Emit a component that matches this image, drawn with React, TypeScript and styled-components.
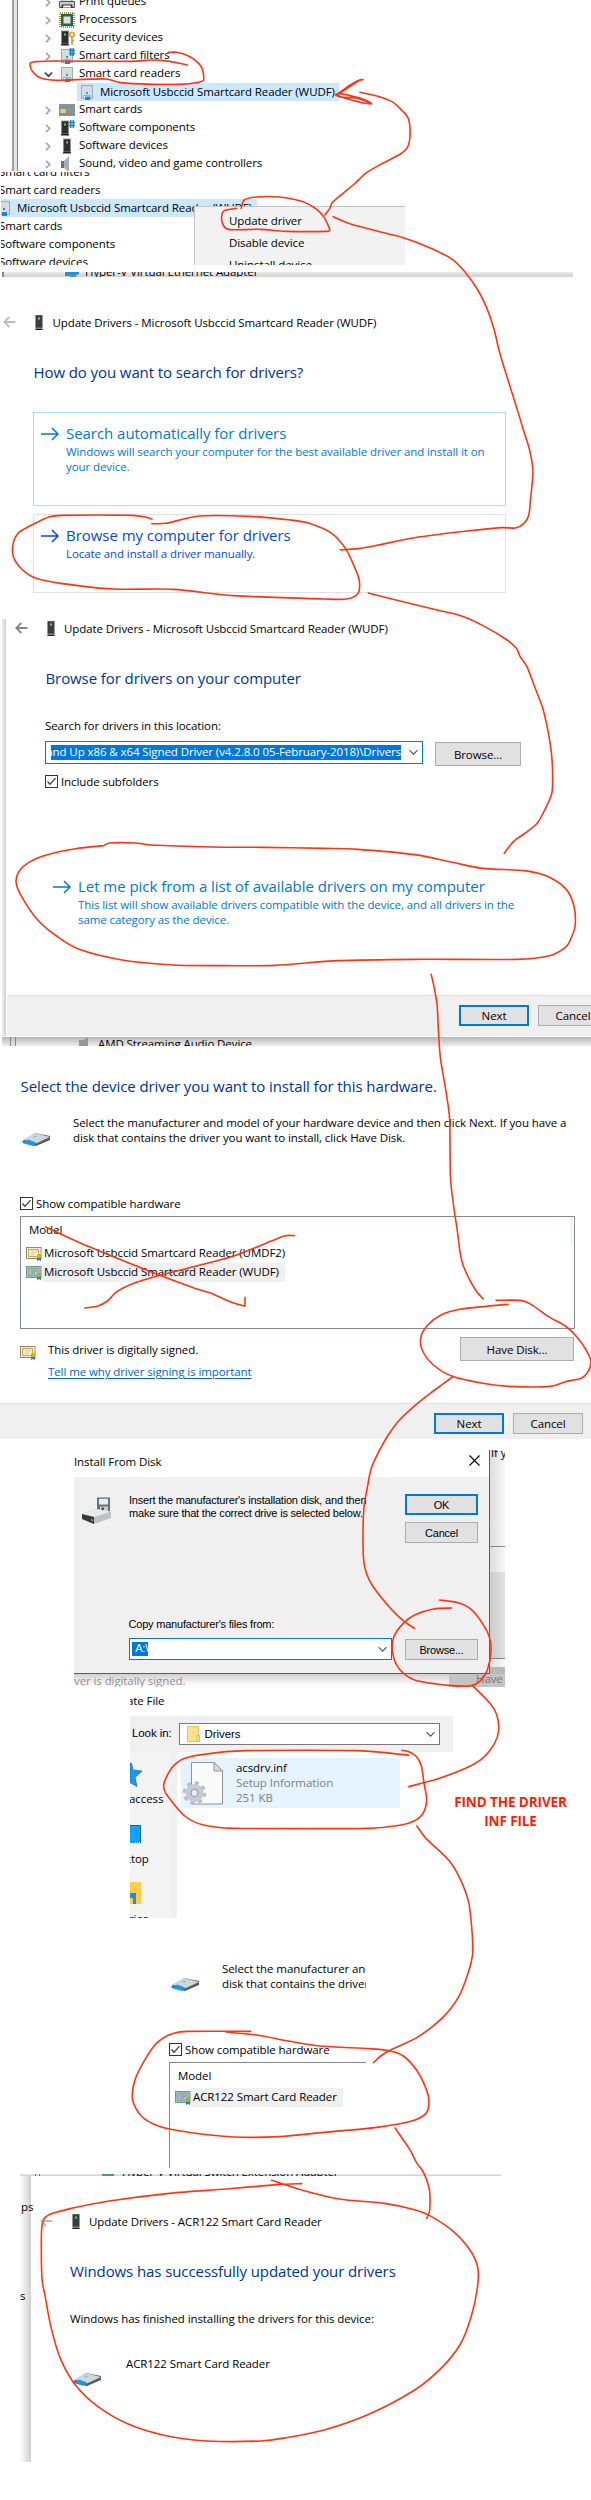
import React from "react";
import styled, { createGlobalStyle, css } from "styled-components";

const Global = createGlobalStyle`
  html, body { margin: 0; background: #fff; }
  * { box-sizing: border-box; }
`;

const ui = `"Open Sans", "Noto Sans", sans-serif`;
const classic = `"Liberation Sans", Arial, sans-serif`;

const Page = styled.main`
  position: relative;
  width: 591px;
  height: 2500px;
  overflow: hidden;
  background: #fff;
  color: #000;
  font-family: ${ui};
  font-size: 11.5px;
  letter-spacing: -0.09px;
  line-height: 15px;
`;

type Space = { $t?: number; $l?: number };
const space = css<Space>`
  margin-top: ${(p) => p.$t ?? 0}px;
  margin-left: ${(p) => p.$l ?? 0}px;
`;

/* A clipped part of a window */
const Panel = styled.section<Space & { $w?: number; $h: number }>`
  ${space}
  display: flex;
  flex-direction: column;
  align-items: stretch;
  width: ${(p) => (p.$w ? `${p.$w}px` : "auto")};
  height: ${(p) => p.$h}px;
  overflow: hidden;
`;
const Row = styled.div<Space & { $h?: number }>`
  ${space}
  display: flex;
  align-items: flex-start;
  flex: none;
  height: ${(p) => (p.$h ? `${p.$h}px` : "auto")};
`;
const Column = styled.div<Space & { $w?: number }>`
  ${space}
  display: flex;
  flex-direction: column;
  flex: none;
  width: ${(p) => (p.$w ? `${p.$w}px` : "auto")};
`;
const Text = styled.div<Space & { $color?: string }>`
  ${space}
  flex: none;
  white-space: nowrap;
  color: ${(p) => p.$color ?? "inherit"};
`;
const Heading = styled.h1<Space>`
  margin: 0;
  ${space}
  flex: none;
  font-size: 15px;
  font-weight: 400;
  line-height: 20px;
  white-space: nowrap;
  color: #003399;
`;
const Button = styled.button<Space & { $w: number; $h: number; $primary?: boolean; $classic?: boolean }>`
  ${space}
  flex: none;
  width: ${(p) => p.$w}px;
  height: ${(p) => p.$h}px;
  padding: 0;
  border: ${(p) => (p.$primary ? "2px solid #0078d7" : "1px solid #adadad")};
  background: #e1e1e1;
  color: #000;
  font-family: ${(p) => (p.$classic ? classic : ui)};
  font-size: ${(p) => (p.$classic ? "11px" : "11.5px")};
  letter-spacing: inherit;
  white-space: nowrap;
`;
const Footer = styled.footer<Space & { $h: number }>`
  ${space}
  display: flex;
  flex: none;
  height: ${(p) => p.$h}px;
  background: #f0f0f0;
  border-top: 1px solid #dfdfdf;
`;

/* Device tree */
const Tree = styled.div`
  display: flex;
  flex-direction: column;
  flex: none;
  margin-top: -7px;
`;
const TreeSide = styled.div`
  flex: none;
  width: 6px;
  height: 171px;
  margin-left: 12px;
  background: #e3e3e3;
  border-left: 2px solid #a0a0a0;
  border-right: 1px solid #828790;
`;
const TreeRow = styled.div`
  display: grid;
  grid-template-columns: 15px 20px auto;
  align-items: center;
  height: 18px;
  padding-left: 26px;
  line-height: 18px;
  white-space: nowrap;
  & > span { margin-top: -2px; }
`;
const SelectedRow = styled.div<{ $w: number; $ml: number; $pad: number }>`
  display: flex;
  align-items: center;
  gap: 5px;
  height: 18px;
  width: ${(p) => p.$w}px;
  margin-left: ${(p) => p.$ml}px;
  padding-left: ${(p) => p.$pad}px;
  background: #cce8ff;
  line-height: 18px;
  white-space: nowrap;
`;
const ShortRow = styled.div`
  height: 18px;
  line-height: 18px;
  margin-left: -2px;
  white-space: nowrap;
`;
const Menu = styled.div`
  position: absolute;
  left: 194px;
  top: 206px;
  width: 211px;
  height: 59px;
  overflow: hidden;
  padding: 3px 0 0 34px;
  background: #f2f2f2;
  border-top: 1px solid #c4c4c4;
  border-left: 1px solid #c4c4c4;
  & > div { height: 22px; line-height: 21px; }
`;
const Strip = styled.div<Space & { $w: number; $h: number; $under?: boolean }>`
  ${space}
  display: flex;
  flex: none;
  width: ${(p) => p.$w}px;
  height: ${(p) => p.$h}px;
  overflow: hidden;
  background: ${(p) => (p.$under ? "linear-gradient(#b8b8b8, #ededed)" : "linear-gradient(#ececec, #cfcfcf)")};
`;

/* Wizard pages */
const Command = styled.div<Space & { $w: number; $h: number; $line: string; $color: string }>`
  ${space}
  display: flex;
  flex: none;
  width: ${(p) => p.$w}px;
  height: ${(p) => p.$h}px;
  padding: 10px 0 0 7px;
  border: 1px solid ${(p) => p.$line};
  color: ${(p) => p.$color};
  white-space: nowrap;
  & > svg { flex: none; margin: 4px 7px 0 0; }
`;
const CommandTitle = styled.div`
  font-size: 15px;
  letter-spacing: -0.04px;
  line-height: 20px;
  margin-bottom: 1px;
`;
const Combo = styled.div<Space & { $w: number; $h: number; $line: string }>`
  ${space}
  display: flex;
  flex: none;
  align-items: center;
  width: ${(p) => p.$w}px;
  height: ${(p) => p.$h}px;
  border: 1px solid ${(p) => p.$line};
  background: #fff;
  & > svg:last-child { margin-left: auto; }
`;
const Picked = styled.div<{ $w: number; $h: number }>`
  display: flex;
  justify-content: flex-end;
  width: ${(p) => p.$w}px;
  height: ${(p) => p.$h}px;
  line-height: ${(p) => p.$h - 1}px;
  overflow: hidden;
  background: #0078d7;
  color: #fff;
  white-space: nowrap;
`;
const Sides = styled.div<{ $h: number }>`
  display: flex;
  height: ${(p) => p.$h}px;
`;
const Shade = styled.div<{ $w: number; $l: number }>`
  flex: none;
  width: ${(p) => p.$w}px;
  margin-left: ${(p) => p.$l}px;
  background: linear-gradient(90deg, #f3f3f3, #cdcdcd);
`;
const EdgeShade = styled(Shade)`
  background: linear-gradient(90deg, #fafafa 10%, #cfcfcf);
`;
const List = styled.div<Space & { $w: number; $h: number; $open?: boolean }>`
  ${space}
  flex: none;
  width: ${(p) => p.$w}px;
  height: ${(p) => p.$h}px;
  border: 1px solid #828790;
  ${(p) => p.$open && "border-right: 0; border-bottom: 0;"}
`;
const ListHead = styled.div<{ $open?: boolean }>`
  height: ${(p) => (p.$open ? 25 : 27)}px;
  margin-right: 2px;
  padding: 5px 0 0 8px;
  border-right: ${(p) => (p.$open ? "0" : "1px solid #e5e5e5")};
`;
const Item = styled.div`
  display: flex;
  align-items: center;
  height: 19px;
  margin-left: 5px;
`;
const ItemLabel = styled.span<{ $on?: boolean }>`
  height: 19px;
  line-height: 18px;
  padding: 0 6px 0 2px;
  background: ${(p) => (p.$on ? "#f0f0f0" : "transparent")};
  white-space: nowrap;
`;
const LinkText = styled(Text)`
  color: #0066cc;
  text-decoration: underline;
  text-underline-offset: 2px;
`;

/* Install From Disk */
const DiskScene = styled(Panel)`
  background: #fff;
`;
const DiskWindow = styled.div`
  flex: none;
  width: 416px;
  height: 224px;
  border-right: 1px solid #5e5e5e;
  border-bottom: 1px solid #5e5e5e;
  background: #f0f0f0;
  font-family: ${classic};
  font-size: 11px;
  letter-spacing: -0.2px;
  line-height: 13px;
`;
const DiskTitle = styled.div`
  display: flex;
  justify-content: space-between;
  height: 27px;
  padding: 5px 9px 0 0;
  background: #fff;
  font-family: ${ui};
  font-size: 11.5px;
  letter-spacing: -0.09px;
  line-height: 14px;
`;
const Behind = styled.div`
  display: flex;
  flex-direction: column;
  width: 15px;
  height: 224px;
  background: linear-gradient(90deg, #ddd, #f8f8f8);
  overflow: hidden;
`;
const Band = styled.div<{ $h: number; $bg: string; $line?: boolean }>`
  flex: none;
  height: ${(p) => p.$h}px;
  background: ${(p) => p.$bg};
  border-bottom: ${(p) => (p.$line ? "1px solid #828790" : "0")};
  padding-left: 1px;
  white-space: nowrap;
`;
const Under = styled.div`
  display: flex;
  justify-content: space-between;
  height: 18px;
  background: linear-gradient(#cfcfcf, #f2f2f2 60%, #fff);
  color: #8f8f8f;
  line-height: 12px;
`;
const DimButton = styled.div`
  width: 56px;
  padding-left: 27px;
  background: #c4c4c4;
  overflow: hidden;
  color: #777;
  line-height: 10px;
`;

/* Locate File */
const Locate = styled(Panel)`
  background: #fff;
`;
const LookBar = styled.div`
  display: flex;
  flex: none;
  height: 36px;
  margin-top: 8px;
  padding: 7px 0 0 2px;
  background: #f0f0f0;
  font-family: ${classic};
  font-size: 11.5px;
`;
const Places = styled.div`
  flex: none;
  width: 47px;
  height: 166px;
  overflow: hidden;
  background: #f4f4f4;
  border-right: 6px solid #f0f0f0;
  & > svg { display: block; }
`;
const FileTile = styled.div`
  display: flex;
  width: 219px;
  height: 50px;
  margin: 6px 0 0 4px;
  padding: 2px 0 0 2px;
  background: #e5f3ff;
`;
const Gray = styled.div`
  color: #808080;
  letter-spacing: -0.03px;
`;
const Note = styled.aside`
  width: 115px;
  margin-top: 106px;
  font-size: 13.5px;
  font-weight: 700;
  line-height: 19px;
  letter-spacing: -0.1px;
  text-align: center;
  color: #fa1e0a;
  white-space: nowrap;
`;
const InkLayer = styled.svg`
  position: absolute;
  left: 0;
  top: 0;
  pointer-events: none;
`;

/* Icons */
const Icon = styled.svg`
  flex: none;
`;
const Chevron = ({ open }: { open?: boolean }) => (
  <Icon width="9" height="9" viewBox="0 0 9 9" fill="none" stroke={open ? "#404040" : "#a6a6a6"} strokeWidth="1.7">
    <path d={open ? "M0.8 2.5 4.5 6.2 8.2 2.5" : "M2 0.8 5.7 4.5 2 8.2"} />
  </Icon>
);
const Down = () => (
  <Icon width="13" height="7" fill="none" stroke="#555" strokeWidth="1.1">
    <path d="M.5 1.2 4.5 5.2 8.5 1.2" />
  </Icon>
);
const Back = ({ color }: { color: string }) => (
  <Icon width="13" height="12" fill="none" stroke={color} strokeWidth="1.8">
    <path d="M12.5 6H1.5M6.3 1 1.3 6l5 5" />
  </Icon>
);
const Go = () => (
  <Icon width="18" height="14" fill="none" stroke="currentColor" strokeWidth="1.5">
    <path d="M0 7h17M11 1l6 6-6 6" />
  </Icon>
);
const Tower = () => (
  <Icon width="8" height="15">
    <rect x=".5" width="7" height="13" fill="#3d3d3d" stroke="#999" strokeWidth=".7" />
    <rect x="3" y="2.5" width="2" height="2" fill="#49f24b" />
    <path d="M1 13.5h6l1 1.5H0z" fill="#222" />
  </Icon>
);
const Check = () => (
  <Icon width="13" height="13" fill="#fff" stroke="#333">
    <rect x=".5" y=".5" width="12" height="12" />
    <path d="M2.5 6.5 5 9.3 10.5 3.2" fill="none" strokeWidth="1.2" />
  </Icon>
);
const Reader = ({ plus }: { plus?: boolean }) => (
  <Icon width="16" height="16">
    <rect x="2.5" y="1.5" width="11" height="13" fill="#d9dcde" stroke="#a5a9ac" />
    <rect x="7" y="8" width="2" height="2" fill="#1ea2ea" />
    <path d="M4.5 11.5h7V15h-7z" fill="#fff" stroke="#8b9094" strokeWidth=".7" />
    <rect x="6" y="12.5" width="5" height="3.5" fill="#1688d8" />
    {plus && <path d="M10 2.5h6M10 5.5h6M11.7 0v8M14.3 0v8" stroke="#1d86d4" strokeWidth="1.6" />}
  </Icon>
);
type Kind = "printer" | "cpu" | "security" | "filter" | "reader" | "card" | "component" | "device" | "sound";
const DeviceIcon = ({ kind }: { kind: Kind }) => {
  if (kind === "filter" || kind === "reader") return <Reader plus={kind === "filter"} />;
  return (
    <Icon width="16" height="16">
      {kind === "printer" && (
        <>
          <rect x="3" y="1" width="10" height="7" fill="#ddd" stroke="#777" />
          <path d="M.5 7.5h15v6H.5z" fill="#c9c9c9" stroke="#555" />
          <path d="M3 10.5h10l1 3.5H2z" fill="#333" />
          <path d="M4.5 11.5h7l.7 2H3.8z" fill="#fff" />
        </>
      )}
      {kind === "cpu" && (
        <>
          <rect x="1" y="1" width="14" height="14" fill="none" stroke="#a8914a" strokeWidth="2" strokeDasharray="1 1" />
          <rect x="2" y="2" width="12" height="12" fill="#27644f" />
          <rect x="4.5" y="4.5" width="7" height="7" fill="#dbe3dd" />
        </>
      )}
      {(kind === "security" || kind === "component" || kind === "device") && (
        <g transform={kind === "device" ? "translate(2 0)" : ""}>
          <rect x="2.5" y="1" width="7" height="13" fill="#2f2f2f" stroke="#8c8c8c" strokeWidth=".8" />
          <rect x="5" y="3.5" width="2" height="2" fill="#49e24b" />
          <path d="M2.5 14h7l1 1.5h-9z" fill="#222" />
        </g>
      )}
      {kind === "security" && (
        <>
          <circle cx="13" cy="4.5" r="2.2" fill="none" stroke="#dca531" strokeWidth="1.8" />
          <path d="M13 7v8M13.5 11H15" stroke="#dca531" strokeWidth="1.8" />
        </>
      )}
      {kind === "component" && <path d="M10 2.5h6M10 5.5h6M11.7 0v8M14.3 0v8" stroke="#1d86d4" strokeWidth="1.6" />}
      {kind === "card" && (
        <>
          <rect y="2" width="16" height="12" fill="#849499" />
          <rect x="1.5" y="7" width="5" height="4" fill="#f5ce68" />
        </>
      )}
      {kind === "sound" && (
        <>
          <path d="M2 5h4v7H2z" fill="#6d7175" />
          <path d="M5 5 10 0v16l-5-4z" fill="#a8adb3" />
        </>
      )}
    </Icon>
  );
};
const Certificate = ({ on }: { on?: boolean }) => (
  <Icon width="16" height="15">
    <rect x=".5" y="1.5" width="14.5" height="11" fill={on ? "#a3c6df" : "#fff"} stroke={on ? "#6595b5" : "#888"} />
    <rect x="2.5" y="3.5" width="10" height="7" rx=".5" fill="none" stroke={on ? "#a9a44e" : "#e3ab18"} strokeWidth="1.3" />
    <path d="M5 6h6M5 8h4" stroke={on ? "#6d8ca0" : "#aaa"} strokeWidth=".9" />
    <path d="M11 11v4l2-1 2 1v-4" fill="#1782cf" />
    <circle cx="13" cy="10" r="2.3" fill={on ? "#b3a537" : "#eaab00"} />
  </Icon>
);
const CardReader = () => (
  <Icon width="30" height="15">
    <path d="M0 10 6 6l8 5-5 3z" fill="#b9dff6" />
    <path d="M3 9 15 1l15 3v4l-14 6-13-3z" fill="#555b5f" />
    <path d="M3 7.5 15 1l15 4-14 6.5z" fill="#d3d6d7" />
    <path d="M3 10.5 8 7.5l8 3-3 3.5z" fill="#1898ea" />
    <path d="m13 5 2-1.2 2 .6-2 1.2z" fill="#55c5f0" />
  </Icon>
);
const Floppy = () => (
  <Icon width="29" height="27">
    <path d="M15 1h13v14H15z" fill="#6e7277" />
    <path d="M17 1.5h9v6h-9z" fill="#eee" />
    <path d="M15 1h13" stroke="#2a76b0" />
    <path d="M18 9.5h8V15h-8z" fill="#c9cbcd" />
    <path d="M19.5 10.5H22V14h-2.5z" fill="#555" />
    <path d="M0 17 14 12l15 3v6l-17 6-12-5z" fill="#bfc1c3" />
    <path d="M0 17 14 12l15 2.5L12 20z" fill="#e9eaeb" />
    <path d="M0 17 12 20v7L0 22z" fill="#37393b" />
    <path d="m9 22 2 .5v1.8l-2-.5z" fill="#2ee03a" />
  </Icon>
);
const InfFile = () => (
  <Icon width="43" height="47">
    <path d="M8.5 2.5H31l8.5 8.5v33h-31z" fill="#fafafa" stroke="#929292" />
    <path d="M31 2.5V11h8.5z" fill="#ddd" stroke="#929292" />
    <circle cx="11.5" cy="33" r="9.7" fill="none" stroke="#b5bec7" strokeWidth="4" strokeDasharray="3.8 3.82" />
    <circle cx="11.5" cy="33" r="6.3" fill="none" stroke="#c3cad1" strokeWidth="5.5" />
    <circle cx="11.5" cy="33" r="3.6" fill="#e9edf1" stroke="#8793a0" />
  </Icon>
);

const before: [Kind, string][] = [
  ["printer", "Print queues"],
  ["cpu", "Processors"],
  ["security", "Security devices"],
  ["filter", "Smart card filters"],
  ["reader", "Smart card readers"],
];
const after: [Kind, string][] = [
  ["card", "Smart cards"],
  ["component", "Software components"],
  ["device", "Software devices"],
  ["sound", "Sound, video and game controllers"],
];
const Branch = ({ kind, label }: { kind: Kind; label: string }) => (
  <TreeRow>
    <Chevron open={kind === "reader"} />
    <DeviceIcon kind={kind} />
    <span>{label}</span>
  </TreeRow>
);

/* Pen strokes: [top offset, x y x y ...] in pen units */
const PEN_X = 1 / 2.653;
const PEN_Y = 1 / 3;
const strokes: [number, string][] = [
  [0, "446 157 470 157 500 168 522 185 536 205 540 240 520 248 480 253 400 253 320 248 280 237 200 239 150 241 110 235 85 212 80 190 95 185 150 183 350 184 400 180 450 184 497 195"],
  [0, "955 277 1000 288 1040 305 1065 330 1083 355 1088 400 1082 440 1062 462 1010 493 970 520 940 552 910 580 882 607 875 625 862 645"],
  [0, "963 239 948 243 925 258 894 283"],
  [0, "958 238 905 277 892 286 960 308 986 311 960 296 900 280 902 291 945 294 986 311"],
  [0, "640 625 648 600 680 591 740 591 800 604 840 628 860 652 875 690 868 694 760 694 690 688 608 689 592 675 588 650 595 632 627 625"],
  [0, "884 650 930 672 1000 693 1070 713 1140 743 1200 778 1235 818 1266 867 1290 920 1310 985 1325 1055 1345 1130 1370 1220 1390 1295 1405 1350 1414 1415 1408 1490 1403 1545 1390 1570 1368 1584 1330 1583 1240 1593 1100 1613 1000 1636 950 1646 903 1650"],
  [270, "403 747 385 741 350 736 165 736 130 741 90 762 50 788 35 820 36 862 60 900 95 925 160 940 300 957 460 958 620 977 860 987 920 987 950 970 953 930 940 890 918 838 880 790 820 760 770 750 660 739 530 738 440 760 403 761"],
  [270, "977 969 1050 990 1160 1020 1230 1040 1290 1072 1345 1110 1370 1135 1380 1160 1398 1190 1420 1255 1440 1315 1455 1390 1463 1450 1466 1510 1464 1570 1445 1620 1425 1660 1395 1688 1368 1709 1350 1731 1338 1750"],
  [830, "275 47 290 39 360 39 400 45 560 51 700 52 860 55 950 58 1100 74 1200 97 1280 115 1390 122 1450 138 1500 175 1522 225 1526 285 1515 325 1500 352 1455 378 1370 388 1100 388 900 392 730 406 600 407 460 405 320 389 210 358 150 318 100 270 60 205 43 160 50 125 80 95 130 73 200 56 275 47"],
  [830, "1144 433 1154 485 1160 530 1163 600 1168 680 1175 730 1184 790 1193 870 1195 1040 1205 1140 1213 1200 1221 1270 1230 1310 1250 1358 1265 1385 1282 1407"],
  [1220, "121 21 240 82 424 166 520 206 560 220 610 245 648 258 650 256 650 233"],
  [1220, "781 47 757 47 720 63 620 108 500 144 424 166 350 192 310 215 285 243 260 258 225 264"],
  [1220, "1316 241 1380 241 1410 254 1455 290 1500 318 1530 350 1555 390 1568 425 1560 455 1542 475 1500 485 1460 499 1350 499 1280 490 1200 469 1150 435 1120 390 1117 350 1135 315 1170 285 1220 268 1290 259 1348 253"],
  [1220, "1200 471 1150 513 1110 548 1060 600 1030 645 1005 695 985 745 975 800 965 870 964 1010 972 1060 990 1100 1040 1170 1073 1205 1100 1225"],
  [1430, "1166 510 1215 518 1250 538 1280 580 1298 620 1303 660 1293 720 1275 752 1250 767 1190 766 1100 750 1060 718 1042 670 1045 620 1070 580 1100 555 1150 537 1198 534"],
  [1660, "1253 76 1300 130 1318 165 1323 210 1312 250 1280 295 1235 325 1160 357 1084 380"],
  [1660, "1066 271 1085 275 1105 290 1118 318 1125 370 1132 420 1122 460 1100 482 1060 496 980 505 620 505 540 495 490 468 440 400 435 370 455 325 485 297 540 283 650 272 950 272 1084 286"],
  [1660, "1106 498 1130 535 1190 600 1220 655 1243 725 1252 810 1254 880 1243 935 1217 1010 1175 1072 1110 1130 1040 1168 1010 1188 991 1208"],
  [1900, "665 394 500 394 455 402 415 430 385 478 358 540 352 600 375 648 420 678 500 697 620 711 740 710 860 697 1000 682 1090 664 1130 640 1138 605 1130 565 1105 510 1070 468 1035 453 980 446 850 438 770 424 680 405 600 396"],
  [1900, "1048 684 1087 748 1105 788 1120 810 1133 843 1140 875 1140 930 1132 955"],
  [2150, "721 91 800 120 900 147 1020 160 1100 179 1140 197 1200 242 1245 297 1267 350 1267 410 1250 500 1220 585 1170 655 1100 720 980 792 860 840 760 863 690 873 550 873 440 857 340 822 260 770 200 705 160 625 135 530 120 440 111 380 111 230 127 196 190 175 290 153 450 130 600 117 735 104 800 101"],
];
const toPath = ([top, data]: [number, string]) => {
  const n = data.split(" ").map(Number);
  const p: number[][] = [];
  for (let i = 0; i < n.length; i += 2) p.push([n[i] * PEN_X, top + n[i + 1] * PEN_Y]);
  let d = `M${p[0][0]} ${p[0][1]}`;
  for (let i = 0; i < p.length - 1; i++) {
    const a = p[i - 1] ?? p[i], b = p[i], c = p[i + 1], e = p[i + 2] ?? c;
    const len = Math.hypot(c[0] - b[0], c[1] - b[1]);
    const k1 = Math.min(1 / 7, len / 2.5 / (Math.hypot(c[0] - a[0], c[1] - a[1]) || 1));
    const k2 = Math.min(1 / 7, len / 2.5 / (Math.hypot(e[0] - b[0], e[1] - b[1]) || 1));
    d += `C${b[0] + (c[0] - a[0]) * k1} ${b[1] + (c[1] - a[1]) * k1} ${c[0] - (e[0] - b[0]) * k2} ${c[1] - (e[1] - b[1]) * k2} ${c[0]} ${c[1]}`;
  }
  return d;
};

export default function App() {
  return (
    <Page>
      <Global />

      <Panel $h={171}>
        <Row $h={171}>
          <TreeSide />
          <Tree>
            {before.map(([k, l]) => <Branch key={l} kind={k} label={l} />)}
            <SelectedRow $w={262} $ml={59} $pad={2}>
              <Reader />Microsoft Usbccid Smartcard Reader (WUDF)
            </SelectedRow>
            {after.map(([k, l]) => <Branch key={l} kind={k} label={l} />)}
          </Tree>
        </Row>
      </Panel>

      <Panel $t={1} $l={1} $h={93}>
        <Column $t={-9}>
          <ShortRow>Smart card filters</ShortRow>
          <ShortRow>Smart card readers</ShortRow>
          <SelectedRow $w={257} $ml={-1} $pad={0}>
            <Icon width="12" height="16" viewBox="4 0 12 16">
              <path d="M0 1.500h13.500v13H0" fill="#d9dcde" stroke="#a5a9ac" />
              <path d="M7 8h2v2H7zM6 12h5v4H6z" fill="#1688d8" />
            </Icon>
            Microsoft Usbccid Smartcard Reader (WUDF)
          </SelectedRow>
          <ShortRow>Smart cards</ShortRow>
          <ShortRow>Software components</ShortRow>
          <ShortRow>Software devices</ShortRow>
        </Column>
      </Panel>
      <Menu>
        <div>Update driver</div>
        <div>Disable device</div>
        <div>Uninstall device</div>
      </Menu>
      <Strip $t={7} $l={2} $w={571} $h={5}>
        <Icon width="83" height="5">
          <path d="M1 0v5" stroke="#888" strokeWidth="2" />
          <path d="M63 0h14v2l-4 2H63z" fill="#2a90cf" />
          <path d="M68 3h6v2h-6z" fill="#42ad48" />
        </Icon>
        <Text $t={-8}>Hyper-V Virtual Ethernet Adapter</Text>
      </Strip>

      <Panel $h={342}>
        <Row $t={38} $l={3}>
          <Row $t={1}><Back color="#bdbdbd" /></Row>
          <Row $l={19}><Tower /></Row>
          <Text $l={9.5}>Update Drivers - Microsoft Usbccid Smartcard Reader (WUDF)</Text>
        </Row>
        <Heading $t={32} $l={33.5}>How do you want to search for drivers?</Heading>
        <Command $t={30} $l={33} $w={473} $h={94} $line="#b5d8f0" $color="#0078d7">
          <Go />
          <div>
            <CommandTitle>Search automatically for drivers</CommandTitle>
            Windows will search your computer for the best available driver and install it on
            <br />your device.
          </div>
        </Command>
        <Command $t={8} $l={33} $w={473} $h={79} $line="#e2e2e2" $color="#0a48dc">
          <Go />
          <div>
            <CommandTitle>Browse my computer for drivers</CommandTitle>
            Locate and install a driver manually.
          </div>
        </Command>
      </Panel>

      <Sides $h={417}>
        <Shade $w={4} $l={2} />
        <Column $w={585} $l={1}>
          <Row $t={2} $l={8}>
            <Row $t={1}><Back color="#888" /></Row>
            <Row $l={19}><Tower /></Row>
            <Text $l={9}>Update Drivers - Microsoft Usbccid Smartcard Reader (WUDF)</Text>
          </Row>
          <Heading $t={32} $l={38.5}>Browse for drivers on your computer</Heading>
          <Text $t={30} $l={38}>Search for drivers in this location:</Text>
          <Row $t={8} $l={38}>
            <Combo $w={378} $h={23} $line="#0078d7">
              <Row $l={5}><Picked $w={350} $h={15}>and Up x86 &amp; x64 Signed Driver (v4.2.8.0 05-February-2018)\Drivers</Picked></Row>
              <Down />
            </Combo>
            <Button $t={1} $l={12} $w={86} $h={24}>Browse...</Button>
          </Row>
          <Row $t={8} $l={38}>
            <Row $t={1}><Check /></Row>
            <Text $l={3}>Include subfolders</Text>
          </Row>
          <Command $t={76} $l={38} $w={500} $h={70} $line="transparent" $color="#0078d7">
            <Go />
            <div>
              <CommandTitle>Let me pick from a list of available drivers on my computer</CommandTitle>
              This list will show available drivers compatible with the device, and all drivers in the
              <br />same category as the device.
            </div>
          </Command>
          <Footer $t={60} $h={41}>
            <Button $t={9} $l={452} $w={70} $h={21} $primary>Next</Button>
            <Button $t={9} $l={9} $w={70} $h={21}>Cancel</Button>
          </Footer>
        </Column>
      </Sides>
      <Strip $t={1} $l={2} $w={589} $h={9} $under>
        <Icon width="96" height="9">
          <path d="M8.500 0v9M13.500 0v9" stroke="#888" />
          <path d="M77 3h4l5-3v9h-9z" fill="#92979b" />
        </Icon>
        <Text $t={-1}>AMD Streaming Audio Device</Text>
      </Strip>

      <Panel $h={393}>
        <Heading $t={30} $l={20.5}>Select the device driver you want to install for this hardware.</Heading>
        <Row $t={19} $l={20}>
          <Row $t={17}><CardReader /></Row>
          <Text $l={23}>
            Select the manufacturer and model of your hardware device and then click Next. If you have a
            <br />disk that contains the driver you want to install, click Have Disk.
          </Text>
        </Row>
        <Row $t={49} $l={20}>
          <Row $t={1}><Check /></Row>
          <Text $l={3}>Show compatible hardware</Text>
        </Row>
        <List $t={5} $l={20} $w={555} $h={113}>
          <ListHead>Model</ListHead>
          <Item><Certificate /><ItemLabel>Microsoft Usbccid Smartcard Reader (UMDF2)</ItemLabel></Item>
          <Item><Certificate on /><ItemLabel $on>Microsoft Usbccid Smartcard Reader (WUDF)</ItemLabel></Item>
        </List>
        <Row $t={8} $l={20} $h={66}>
          <Row $t={8}><Certificate /></Row>
          <Column $l={12} $w={412}>
            <Text $t={5}>This driver is digitally signed.</Text>
            <LinkText $t={7}>Tell me why driver signing is important</LinkText>
          </Column>
          <Button $w={114} $h={24}>Have Disk...</Button>
        </Row>
        <Footer $h={36}>
          <Button $t={9} $l={434} $w={70} $h={21} $primary>Next</Button>
          <Button $t={9} $l={9} $w={70} $h={21}>Cancel</Button>
        </Footer>
      </Panel>

      <DiskScene $t={11} $l={74} $w={431} $h={237}>
        <Row>
          <DiskWindow>
            <DiskTitle>
              <span>Install From Disk</span>
              <Icon width="11" height="11" stroke="#000" strokeWidth="1.1"><path d="m.5.5 10 10M10.500.5l-10 10" /></Icon>
            </DiskTitle>
            <Row $l={8}>
              <Row $t={20}><Floppy /></Row>
              <Column $t={17} $l={18} $w={276}>
                <Text>Insert the manufacturer's installation disk, and then<br />make sure that the correct drive is selected below.</Text>
              </Column>
              <Column $t={17}>
                <Button $classic $primary $w={73} $h={21}>OK</Button>
                <Button $classic $t={7} $w={73} $h={21}>Cancel</Button>
              </Column>
            </Row>
            <Text $t={75} $l={54.5}>Copy manufacturer's files from:</Text>
            <Row $t={7} $l={55}>
              <Combo $w={263} $h={22} $line="#0078d7">
                <Row $l={2}><Picked $w={16} $h={14}>A:\</Picked></Row>
                <Down />
              </Combo>
              <Button $classic $t={1} $l={13} $w={73} $h={21}>Browse...</Button>
            </Row>
          </DiskWindow>
          <Behind>
            <Band $h={97} $bg="transparent" $line><Text $t={-5}>If y</Text></Band>
            <Band $h={25} $bg="transparent" />
            <Band $h={87} $bg="rgba(140,140,140,.22)" $line />
            <Band $h={8} $bg="transparent" />
            <Band $h={8} $bg="#b8b8b8" />
          </Behind>
        </Row>
        <Under>
          <Text $t={1}>ver is digitally signed.</Text>
          <DimButton>Have</DimButton>
        </Under>
      </DiskScene>

      <Row $l={130} $h={231}>
        <Locate $w={323} $h={231}>
          <Text $t={6} $l={-3}>ate File</Text>
          <LookBar>
            <Text $t={3}>Look in:</Text>
            <Combo $l={7} $w={261} $h={22} $line="#7a7a7a">
              <Row $l={7}>
                <Icon width="13" height="16">
                  <path d="M.5.5h11v15H.5z" fill="#ffe08a" stroke="#e8c35a" />
                  <path d="M10 9.500h2.500v6H10z" fill="#ffe08a" stroke="#dcb544" strokeWidth=".8" />
                </Icon>
              </Row>
              <Text $l={5}>Drivers</Text>
              <Down />
            </Combo>
          </LookBar>
          <Row>
            <Places>
              <Icon width="14" height="36"><path d="m0 11 1.500.5L3 18l9 1-7 6.500 2 9-7-4z" fill="#1b9af0" stroke="#0c75bd" strokeWidth=".8" /></Icon>
              <Text $t={3} $l={-1}>access</Text>
              <Icon width="12" height="37">
                <path d="M0 19.500h10.500V38H0" fill="#12a1ff" stroke="#0c66ac" />
                <path d="M5 36.500h5" stroke="#fff" strokeDasharray="1 1" />
              </Icon>
              <Text $t={8} $l={-5}>ktop</Text>
              <Icon width="12" height="38">
                <path d="M0 16h11v22H0z" fill="#ffcd4d" />
                <path d="M0 27h6v11H3v-6H0z" fill="#2f86d0" />
              </Icon>
              <Text $t={7} $l={-1}>ries</Text>
            </Places>
            <FileTile>
              <InfFile />
              <Column $l={10}>
                <Text>acsdrv.inf</Text>
                <Gray>Setup Information</Gray>
                <Gray>251 KB</Gray>
              </Column>
            </FileTile>
          </Row>
        </Locate>
        <Note>FIND THE DRIVER<br />INF FILE</Note>
      </Row>

      <Panel $t={43} $l={169} $w={197} $h={207}>
        <Row>
          <Row $t={16}><CardReader /></Row>
          <Text $l={23}>Select the manufacturer and<br />disk that contains the driver</Text>
        </Row>
        <Row $t={50}>
          <Row $t={1}><Check /></Row>
          <Text $l={3}>Show compatible hardware</Text>
        </Row>
        <List $t={5} $w={197} $h={107} $open>
          <ListHead $open>Model</ListHead>
          <Item><Certificate on /><ItemLabel $on>ACR122 Smart Card Reader</ItemLabel></Item>
        </List>
      </Panel>

      <Panel $t={6} $l={20} $w={481} $h={288}>
        <Strip $w={481} $h={2}>
          <Icon width="102" height="2">
            <path d="M15.500 0v2M19.500 0v2" stroke="#777" />
            <path d="M82 0h12v2H82z" fill="#3b9e9d" />
          </Icon>
          <Text $t={-10}>Hyper-V Virtual Switch Extension Adapter</Text>
        </Strip>
        <Sides $h={286}>
          <EdgeShade $w={11} $l={0}>
            <Text $t={23} $l={1}>ps</Text>
            <Text $t={74}>s</Text>
          </EdgeShade>
          <Column>
            <Row $t={38} $l={9}>
              <Row $t={1}><Back color="#bdbdbd" /></Row>
              <Row $l={19}><Tower /></Row>
              <Text $l={9}>Update Drivers - ACR122 Smart Card Reader</Text>
            </Row>
            <Heading $t={32} $l={39}>Windows has successfully updated your drivers</Heading>
            <Text $t={30} $l={39}>Windows has finished installing the drivers for this device:</Text>
            <Row $t={30} $l={40}>
              <Row $t={16}><CardReader /></Row>
              <Text $l={25}>ACR122 Smart Card Reader</Text>
            </Row>
          </Column>
        </Sides>
      </Panel>

      <InkLayer width="591" height="2500" fill="none" stroke="#fb3616" strokeWidth="1.6" strokeLinecap="round" strokeLinejoin="round">
        {strokes.map((s, i) => <path key={i} d={toPath(s)} />)}
      </InkLayer>
    </Page>
  );
}
